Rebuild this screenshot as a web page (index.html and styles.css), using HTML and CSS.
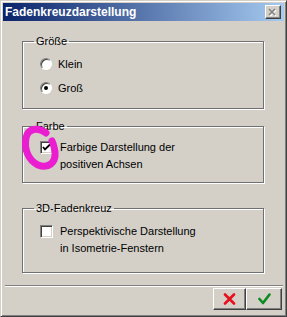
FILE: index.html
```html
<!DOCTYPE html>
<html lang="de">
<head>
  <meta charset="UTF-8" />
  <title>Fadenkreuzdarstellung</title>
  <link rel="stylesheet" href="styles.css">
</head>
<body>

<div class="window">
  <div class="titlebar">
    <span class="title">Fadenkreuzdarstellung</span>
    <span class="close">
      <svg width="10" height="9" viewBox="0 0 10 9">
        <path d="M2 2 L8 8 M8 2 L2 8" stroke="#fff" stroke-width="1.6"/>
        <path d="M1 1 L7 7 M7 1 L1 7" stroke="#808080" stroke-width="1.6"/>
      </svg>
    </span>
  </div>

  <div class="content">
    <fieldset class="group group-size">
      <legend>Größe</legend>
      <label class="row"><span class="radio"></span>Klein</label>
      <label class="row"><span class="radio checked"></span>Groß</label>
    </fieldset>

    <fieldset class="group group-color">
      <legend>Farbe</legend>
      <label class="row multi">
        <span class="check checked">
          <svg width="9" height="9" viewBox="0 0 9 9"><path d="M1 4 L3 6.5 L8 1.5" stroke="#000" stroke-width="1.8" fill="none"/></svg>
        </span>
        <span class="text">Farbige Darstellung der<br>positiven Achsen</span>
      </label>
    </fieldset>

    <fieldset class="group group-3d">
      <legend>3D-Fadenkreuz</legend>
      <label class="row multi">
        <span class="check"></span>
        <span class="text">Perspektivische Darstellung<br>in Isometrie-Fenstern</span>
      </label>
    </fieldset>
  </div>

  <div class="footer">
    <button class="btn btn-cancel">
      <svg width="13" height="12" viewBox="0 0 13 12">
        <path d="M2 1.5 L11 10.5 M11 1.5 L2 10.5" stroke="#e8101c" stroke-width="2.6" stroke-linecap="round"/>
      </svg>
    </button>
    <button class="btn btn-ok">
      <svg width="13" height="12" viewBox="0 0 13 12">
        <path d="M1.5 6 L5 10 L11.5 1.5" stroke="#0b8a1e" stroke-width="2.6" fill="none" stroke-linecap="round" stroke-linejoin="round"/>
      </svg>
    </button>
  </div>

  <!-- Markierung um die Checkbox -->
  <svg class="mark" width="287" height="317" viewBox="0 0 287 317">
    <path d="M46 133 C 38 127, 28 128, 26 138 C 24 149, 28 160, 38 165 C 48 169, 56 163, 55 152 C 54 146, 53 143, 52 141" stroke="#ea1ed0" stroke-width="7" fill="none" stroke-linecap="round"/>
  </svg>
</div>

</body>
</html>
```

FILE: styles.css
```css
body {
  margin: 0;
  background: #d4d0c8;
  font-family: "Liberation Sans", Arial, sans-serif;
  font-size: 11px;
  color: #000;
}
.window {
  position: relative;
  width: 287px;
  height: 317px;
  box-sizing: border-box;
  padding: 2px;
  background: #d4d0c8;
  border: 1px solid;
  border-color: #d4d0c8 #404040 #404040 #d4d0c8;
  box-shadow: inset 1px 1px #fff, inset -1px -1px #808080;
  display: flex;
  flex-direction: column;
}
.titlebar {
  height: 18px;
  display: flex;
  align-items: center;
  justify-content: space-between;
  padding: 0 3px 0 2px;
  background: linear-gradient(to right, #0a246a, #a6caf0);
}
.title {
  color: #fff;
  font-weight: bold;
  font-size: 12px;
}
.close {
  width: 16px;
  height: 14px;
  box-sizing: border-box;
  background: #d4d0c8;
  border: 1px solid;
  border-color: #fff #404040 #404040 #fff;
  box-shadow: inset -1px -1px #808080;
  display: flex;
  align-items: center;
  justify-content: center;
}
.content {
  padding: 14px 0 0 19px;
}
.group {
  width: 242px;
  box-sizing: border-box;
  margin: 0;
  padding: 4px 0 0 17px;
  border: 1px solid #707070;
  box-shadow: inset 1px 1px #fff, 1px 1px #fff;
}
.group legend {
  margin-left: -6px;
  padding: 0 2px;
  line-height: 13px;
}
.group-size {
  height: 74px;
}
.group-color {
  height: 63px;
  margin-top: 11px;
  padding-top: 6px;
}
.group-3d {
  height: 71px;
  margin-top: 19px;
  padding-top: 8px;
}
.row {
  display: flex;
  align-items: center;
  height: 24px;
}
.row.multi {
  align-items: flex-start;
  height: auto;
}
.text {
  line-height: 17px;
  margin-left: 7px;
}
.radio {
  width: 12px;
  height: 12px;
  box-sizing: border-box;
  margin-right: 6px;
  border-radius: 50%;
  background: #fff;
  border: 1px solid;
  border-color: #808080 #fff #fff #808080;
  box-shadow: inset 1px 1px #404040;
  display: flex;
  align-items: center;
  justify-content: center;
}
.radio.checked::after {
  content: "";
  width: 4px;
  height: 4px;
  border-radius: 50%;
  background: #000;
}
.check {
  width: 13px;
  height: 13px;
  flex: none;
  box-sizing: border-box;
  margin-top: 2px;
  background: #fff;
  border: 1px solid;
  border-color: #808080 #fff #fff #808080;
  box-shadow: inset 1px 1px #404040, inset -1px -1px #d4d0c8;
  display: flex;
  align-items: center;
  justify-content: center;
}
.footer {
  margin: auto 1px 0 2px;
  padding: 2px 0 4px;
  border-top: 1px solid #808080;
  box-shadow: inset 0 1px #fff;
  display: flex;
  justify-content: flex-end;
}
.btn {
  height: 22px;
  padding: 0;
  background: #d4d0c8;
  border: 1px solid;
  border-color: #fff #404040 #404040 #fff;
  box-shadow: inset -1px -1px #808080;
  display: flex;
  align-items: center;
  justify-content: center;
}
.btn-cancel {
  width: 33px;
}
.btn-ok {
  width: 36px;
  margin-right: 1px;
}
.mark {
  position: absolute;
  top: -1px;
  left: -1px;
  pointer-events: none;
}
```
